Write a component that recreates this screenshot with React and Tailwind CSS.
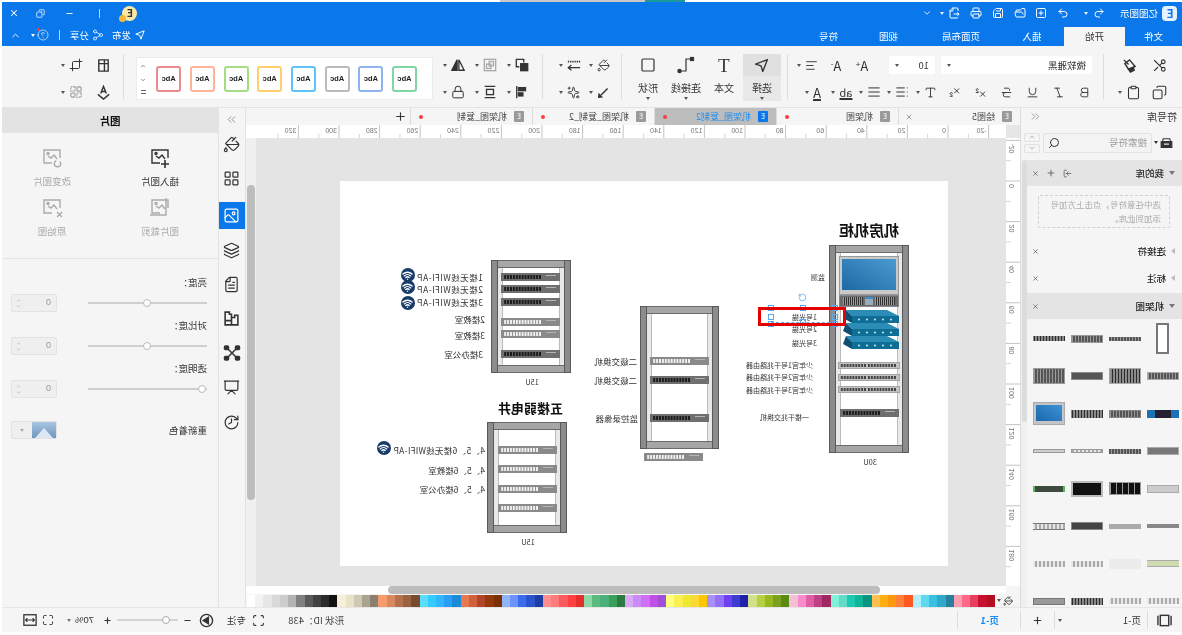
import React from 'react';
import {
  X, Copy, Minus, ChevronUp, ChevronDown, CircleHelp, Share2, Undo2, Redo2, SquarePlus, FolderOpen, Save, Printer, FileOutput,
  Scissors, Clipboard, Bold, Italic, Underline, Strikethrough, Superscript, Subscript, AlignJustify, List, AlignRight,
  PaintBucket, LayoutGrid, Image, Layers, FileText, Presentation, History, Search, Plus, LogIn, RotateCw, Square, Type,
  ChevronsLeft, ChevronsRight, Lock, Sparkles, Crop, Scan, Maximize, Wifi,
} from 'lucide-react';

// The whole screenshot is a mirror image, so the app is written the normal way round and flipped once at the root.

const Caret = ({ className = 'text-[#555]' }) => <span className={`inline-block w-0 h-0 border-x-[2.5px] border-x-transparent border-t-[3px] border-t-current ${className}`} />;

const Cell = ({ w, icon: Icon, caret, size = 15, faded, children }) => (
  <div className={`${w} h-full flex items-center justify-center gap-[4px] ${faded ? 'text-[#aaa]' : 'text-[#333]'}`}>
    {Icon ? <Icon size={size} strokeWidth={1.7} /> : children}
    {caret && <Caret />}
  </div>
);

const Sep = ({ className = '' }) => <div className={`w-px bg-[#dcdcdc] ${className}`} />;

const Glyph = ({ size = 15, children }) => (
  <svg width={size} height={size} viewBox="0 0 16 16" fill="none" stroke="currentColor" strokeWidth="1.5">{children}</svg>
);

const CursorIcon = ({ size = 17 }) => (
  <svg width={size} height={size} viewBox="0 0 20 20" fill="none" stroke="currentColor" strokeWidth="1.6" strokeLinejoin="round">
    <path d="M3 3 L17 8.5 L10.5 10.5 L8.5 17 Z" />
  </svg>
);

const Connector = () => (
  <svg width="18" height="18" viewBox="0 0 18 18" fill="none" stroke="#333" strokeWidth="1.2">
    <path d="M3 3 H9 V15 H15" />
    <rect x="1.5" y="1.5" width="3" height="3" fill="#333" />
    <circle cx="15.5" cy="15" r="1.6" fill="#333" />
  </svg>
);

const PainterIcon = ({ size }) => <Glyph size={size}><path d="M2 9 L8 2 L13 6 L9 12 Z" /><path d="M9 7 L14 2" /><path d="M4 10 L9 12 L7 15 L3 13 Z" fill="currentColor" /></Glyph>;
const FlipIcon = ({ size }) => <Glyph size={size}><path d="M7 2 V14 H1 Z" /><path d="M9 2 V14 H15 Z" fill="currentColor" /></Glyph>;
const FrontIcon = ({ size }) => <Glyph size={size}><rect x="1.5" y="6.5" width="8" height="8" fill="currentColor" /><path d="M6 5 V1.5 H14.5 V10 H11" /></Glyph>;
const GroupIcon = ({ size }) => <Glyph size={size}><rect x="1.5" y="1.5" width="13" height="13" /><rect x="4" y="4" width="5" height="5" /><rect x="7" y="7" width="5" height="5" /></Glyph>;
const AlignIcon = ({ size }) => <Glyph size={size}><path d="M14 1 V15" /><rect x="4" y="3" width="8" height="3.5" fill="currentColor" /><rect x="7" y="9" width="5" height="3.5" fill="currentColor" /></Glyph>;
const DistributeIcon = ({ size }) => <Glyph size={size}><path d="M2 1.5 H14 M2 14.5 H14" /><rect x="4" y="5" width="8" height="6" /></Glyph>;
const SpacingIcon = ({ size }) => <Glyph size={size}><path d="M1 4 H15" strokeDasharray="1.5 1" strokeWidth="2" /><path d="M1 11 H14 M11 8 L14.5 11 L11 14" /></Glyph>;
const LineIcon = ({ size }) => <Glyph size={size}><path d="M3 3 L11 11" strokeWidth="1.8" /><path d="M10 13.5 L14 14 L13.5 10 Z" fill="currentColor" /></Glyph>;
const PageIcon = ({ size }) => <Glyph size={size}><path d="M3 2 H13 V14 H3 Z" /><path d="M3 6 H13 M7 2 V14" /></Glyph>;
const StyleAIcon = ({ size }) => <Glyph size={size}><path d="M5 9 L8 1.5 L11 9 M6 7 H10" /><path d="M2 10 L8 15 L14 10" /></Glyph>;
const PiecesIcon = ({ size }) => <Glyph size={size}><circle cx="4.5" cy="4.5" r="2.5" /><rect x="9" y="2" width="5" height="5" strokeDasharray="2 1" /><rect x="2" y="9" width="5" height="5" strokeDasharray="2 1" /><circle cx="11.5" cy="11.5" r="2.5" /></Glyph>;
const PuzzleIcon = ({ size = 17 }) => <Glyph size={size}><path d="M2 5 H5 V7 H8 V4 H10 V2 H14 V14 H2 Z" /><path d="M8 7 V14 M8 10 H14" /></Glyph>;
const LibraryIcon = () => <Glyph size={13}><path d="M4 3.5 H12 L13 7 H3 Z" strokeWidth="1.3" /><rect x="1.5" y="7" width="13" height="7" fill="currentColor" /><path d="M5 10 H11" stroke="#f5f5f5" /></Glyph>;
const FitIcon = () => <Glyph size={14}><rect x="1" y="2" width="14" height="12" /><path d="M3.5 8 H12.5 M5 6 L3 8 L5 10 M11 6 L13 8 L11 10" strokeWidth="1.3" /></Glyph>;
const PageViewIcon = () => <Glyph size={15}><rect x="3.5" y="2.5" width="9" height="11" /><path d="M1 3 V13 M15 3 V13" /></Glyph>;
const PlayIcon = () => <Glyph size={15}><circle cx="8" cy="8" r="6.5" /><path d="M6 4.5 L11.5 8 L6 11.5 Z" fill="currentColor" /></Glyph>;

const TitleBar = () => (
  <div className="h-[44px] bg-[#0a78ea] text-white flex flex-col shrink-0">
    <div className="h-[25px] flex items-center pb-[3px]">
      <div className="w-[24px] flex justify-center">
        <div className="w-[15px] h-[15px] rounded-[4px] bg-white/90 flex items-center justify-center text-[#0a78ea] text-[11px] font-bold leading-none">E</div>
      </div>
      <span className="text-[9.5px] w-[48px]">亿图图示</span>
      <Cell w="w-[22px]"><Undo2 size={12} className="text-white" /></Cell>
      <Caret className="text-white/90" />
      <div className="w-[10px]" />
      <Cell w="w-[22px]"><Redo2 size={12} className="text-white" /></Cell>
      <Cell w="w-[21px]"><SquarePlus size={12} className="text-white" /></Cell>
      <Cell w="w-[22px]"><FolderOpen size={12} className="text-white" /></Cell>
      <Cell w="w-[22px]"><Save size={12} className="text-white" /></Cell>
      <Cell w="w-[22px]"><Printer size={12} className="text-white" /></Cell>
      <Cell w="w-[21px]"><FileOutput size={12} className="text-white" /></Cell>
      <Caret className="text-white/90" />
      <div className="w-[8px]" />
      <ChevronDown size={10} />
      <div className="ml-auto flex h-full items-center">
        <div className="w-[30px] flex justify-center">
          <div className="relative w-[15px] h-[15px] rounded-full bg-[#fbe9a8] text-[#333] text-[10px] font-bold flex items-center justify-center leading-none">
            E
            <span className="absolute -bottom-[1px] -right-[3px] w-[7px] h-[7px] rounded-full bg-[#f5b73d]" />
          </div>
        </div>
        <div className="w-[30px] flex justify-center"><div className="w-px h-[9px] bg-white/70" /></div>
        <div className="w-[30px] flex justify-center"><Minus size={9} strokeWidth={2.5} /></div>
        <div className="w-[28px] flex justify-center"><Copy size={9} strokeWidth={2} /></div>
        <div className="w-[25px] flex justify-center"><X size={10} strokeWidth={2.5} /></div>
      </div>
    </div>
    <div className="h-[19px] flex items-center">
      <div className="w-[57px] text-center text-[9.5px]">文件</div>
      <div className="w-[61px] h-full bg-[#f5f5f5] text-[#333] text-[9.5px] flex items-center justify-center">开始</div>
      <div className="w-[64px] text-center text-[9.5px]">插入</div>
      <div className="w-[78px] text-center text-[9.5px]">页面布局</div>
      <div className="w-[67px] text-center text-[9.5px]">视图</div>
      <div className="w-[53px] text-center text-[9.5px]">符号</div>
      <div className="ml-auto flex items-center pb-[3px]">
        <CursorIcon size={12} />
        <span className="text-[9.5px] ml-[3px] mr-[8px]">发布</span>
        <Share2 size={12} strokeWidth={1.5} />
        <span className="text-[9.5px] ml-[3px]">分享</span>
        <div className="w-px h-[10px] bg-white/70 ml-[10px]" />
        <div className="relative ml-[10px]">
          <CircleHelp size={12} strokeWidth={1.3} />
          <span className="absolute -top-[1px] right-0 w-[3px] h-[3px] rounded-full bg-[#ff3b30]" />
        </div>
        <Caret className="ml-[2px] text-white" />
        <ChevronUp size={11} className="ml-[10px] mr-[8px]" />
      </div>
    </div>
  </div>
);

const GALLERY = ['#7fd6a4', '#8eb4ee', '#bbbbbb', '#5ec3f7', '#ffcf6b', '#a5dd85', '#ffb399', '#ec8a8f'];

const Ribbon = () => (
  <div className="h-[62px] bg-[#f5f5f5] flex shrink-0 border-b border-[#e2e2e2] text-[#333]">
    <div className="w-[78px] flex flex-col pt-[10px] gap-[9px] pl-[9px]">
      <div className="h-[18px] flex">
        <Cell w="w-[26px]" icon={Scissors} />
        <div className="w-[4px]" />
        <Cell w="w-[26px]"><PainterIcon size={15} /></Cell>
      </div>
      <div className="h-[18px] flex">
        <Cell w="w-[26px]" icon={Copy} />
        <div className="w-[4px]" />
        <Cell w="w-[26px]" icon={Clipboard} caret />
      </div>
    </div>
    <Sep className="my-[8px]" />
    <div className="w-[315px] flex flex-col pt-[10px] gap-[9px]">
      <div className="h-[18px] flex pl-[11px]">
        <div className="w-[151px] h-full bg-white rounded-[2px] flex items-center justify-between px-[6px] text-[9.5px]">
          微软雅黑
          <Caret />
        </div>
        <div className="w-[46px] ml-[6px] h-full bg-white rounded-[2px] flex items-center justify-between px-[6px] text-[9.5px]">
          10
          <Caret />
        </div>
        <div className="w-[14px]" />
        <Cell w="w-[26px]"><span className="text-[13px] leading-none">A<sup className="text-[8px]">+</sup></span></Cell>
        <Cell w="w-[26px]"><span className="text-[13px] leading-none">A<sup className="text-[8px]">-</sup></span></Cell>
        <Cell w="w-[30px]" icon={AlignRight} caret size={13} />
      </div>
      <div className="h-[18px] flex pl-[5px]">
        <Cell w="w-[26px]" icon={Bold} size={13} />
        <Cell w="w-[26px]" icon={Italic} size={13} />
        <Cell w="w-[26px]" icon={Underline} size={13} />
        <Cell w="w-[26px]" icon={Strikethrough} size={13} />
        <Cell w="w-[26px]" icon={Superscript} size={13} />
        <Cell w="w-[26px]" icon={Subscript} size={13} />
        <Cell w="w-[30px]" icon={Type} caret size={13} />
        <Cell w="w-[28px]" icon={List} caret size={14} />
        <Cell w="w-[28px]" icon={AlignJustify} caret size={14} />
        <Cell w="w-[28px]"><span className="text-[11px] leading-none underline decoration-2">ab</span><Caret /></Cell>
        <Cell w="w-[30px]"><span className="text-[13px] leading-none underline decoration-2">A</span><Caret /></Cell>
      </div>
    </div>
    <Sep className="my-[8px]" />
    <div className="w-[165px] flex pl-[6px] pt-[8px] pb-[6px] text-[10px]">
      <div className="w-[38px] bg-[#e8e8e8] flex flex-col items-center">
        <div className="h-[22px] w-full bg-[#e0e0e0] flex items-center justify-center"><CursorIcon /></div>
        <span className="mt-[5px] leading-[14px]">选择</span>
        <Caret className="mt-[2px] text-[#555]" />
      </div>
      <div className="w-[38px] flex flex-col items-center">
        <div className="h-[22px] flex items-center"><span className="text-[19px] font-['Liberation_Serif',serif] leading-none">T</span></div>
        <span className="mt-[5px] leading-[14px]">文本</span>
      </div>
      <div className="w-[38px] flex flex-col items-center">
        <div className="h-[22px] flex items-center"><Connector /></div>
        <span className="mt-[5px] leading-[14px]">连接线</span>
        <Caret className="mt-[2px] text-[#555]" />
      </div>
      <div className="w-[38px] flex flex-col items-center">
        <div className="h-[22px] flex items-center"><Square size={16} strokeWidth={1.8} /></div>
        <span className="mt-[5px] leading-[14px]">形状</span>
        <Caret className="mt-[2px] text-[#555]" />
      </div>
    </div>
    <Sep className="my-[8px]" />
    <div className="w-[78px] flex flex-col pt-[10px] gap-[9px] pl-[6px]">
      <div className="h-[18px] flex">
        <Cell w="w-[30px]" icon={PaintBucket} caret size={13} />
        <Cell w="w-[30px]" caret><SpacingIcon size={14} /></Cell>
      </div>
      <div className="h-[18px] flex">
        <Cell w="w-[30px]" caret><LineIcon size={13} /></Cell>
        <Cell w="w-[30px]" icon={Sparkles} caret size={13} />
      </div>
    </div>
    <Sep className="my-[8px]" />
    <div className="w-[109px] flex flex-col pt-[10px] gap-[9px] pl-[8px]">
      <div className="h-[18px] flex">
        <Cell w="w-[32px]" caret><FrontIcon size={14} /></Cell>
        <Cell w="w-[32px]" caret faded><GroupIcon size={14} /></Cell>
        <Cell w="w-[32px]" caret><FlipIcon size={14} /></Cell>
      </div>
      <div className="h-[18px] flex">
        <Cell w="w-[32px]" caret><AlignIcon size={14} /></Cell>
        <Cell w="w-[32px]" caret><DistributeIcon size={14} /></Cell>
        <Cell w="w-[32px]" icon={Lock} caret size={14} />
      </div>
    </div>
    <div className="w-[297px] h-[43px] mt-[11px] bg-white border border-[#ececec] flex items-center pl-[15px] gap-[8.7px]">
      {GALLERY.map((c, i) => (
        <div key={i} style={{ borderColor: c }} className="w-[25px] h-[26px] shrink-0 rounded-[3px] border-2 bg-white flex items-center justify-center text-[7.5px] font-semibold text-[#222] font-['Liberation_Sans',sans-serif]">Abc</div>
      ))}
      <div className="ml-[1px] h-full flex flex-col justify-between items-center py-[5px] text-[#666]">
        <ChevronUp size={6} strokeWidth={3} />
        <ChevronDown size={6} strokeWidth={3} />
        <Menu3 />
      </div>
    </div>
    <div className="w-[12px]" />
    <Sep className="my-[8px]" />
    <div className="flex flex-col pt-[10px] gap-[9px] pl-[9px]">
      <div className="h-[18px] flex">
        <Cell w="w-[20px]"><PageIcon size={15} /></Cell>
        <div className="w-[7px]" />
        <Cell w="w-[30px]" icon={Crop} caret size={14} />
      </div>
      <div className="h-[18px] flex">
        <Cell w="w-[20px]"><StyleAIcon size={15} /></Cell>
        <div className="w-[7px]" />
        <Cell w="w-[30px]" caret faded><PiecesIcon size={14} /></Cell>
      </div>
    </div>
  </div>
);

const Menu3 = () => <div className="w-[5px] h-[4px] border-y border-[#666]" />;

const Tab = ({ name, active, closable }) => (
  <div className={`w-[122px] h-full flex items-center pl-[8px] border-r border-[#dcdcdc] text-[9px] shrink-0 ${active ? 'bg-[#bdbdbd] text-[#1b8ef2]' : 'text-[#444]'}`}>
    <div className={`w-[10px] h-[11px] rounded-[1px] flex items-center justify-center text-[7px] leading-none text-white ${active ? 'bg-[#0a78ea]' : 'bg-[#9a9a9a]'}`}>E</div>
    <span className="ml-[7px]">{name}</span>
    {closable ? <X size={8} className="ml-auto mr-[6px] text-[#777]" /> : <span className="ml-auto mr-[8px] w-[4px] h-[4px] rounded-full bg-[#ff3b3b]" />}
  </div>
);

const RULER_STEP = 2.03;
const TOP_VALUES = [-20, 0, 20, 40, 60, 80, 100, 120, 140, 160, 180, 200, 220, 240, 260, 280, 300, 320];
const SIDE_VALUES = [-20, 0, 20, 40, 60, 80, 100, 120, 140, 160, 180];

const TopRuler = () => (
  <svg width="774" height="13" className="block shrink-0 bg-white">
    <rect x="0" y="0" width="14" height="13" fill="#e6e6e6" />
    {TOP_VALUES.map((v) => {
      const x = 72 + v * RULER_STEP;
      return (
        <g key={v}>
          <line x1={x} y1="0" x2={x} y2="13" stroke="#c4c4c4" />
          <line x1={x + 20.3} y1="9" x2={x + 20.3} y2="13" stroke="#d4d4d4" />
          <text x={x + 2} y="8" fontSize="7" fill="#777" fontFamily="Liberation Sans">{v}</text>
        </g>
      );
    })}
  </svg>
);

const SideRuler = () => (
  <svg width="14" height="448" className="block shrink-0 bg-white">
    {SIDE_VALUES.map((v) => {
      const y = 43 + v * RULER_STEP;
      return (
        <g key={v}>
          <line x1="0" y1={y} x2="14" y2={y} stroke="#c4c4c4" />
          <line x1="9" y1={y + 20.3} x2="14" y2={y + 20.3} stroke="#d4d4d4" />
          <text x="6" y={y + 3} fontSize="7" fill="#777" fontFamily="Liberation Sans" transform={`rotate(90 6 ${y + 3})`}>{v}</text>
        </g>
      );
    })}
  </svg>
);

const Rack = ({ className }) => (
  <div className={`absolute flex ${className}`}>
    <div className="w-[7px] bg-[#8c8c8c] border border-[#5a5a5a]" />
    <div className="flex-1 flex flex-col">
      <div className="h-[8px] bg-[#a6a6a6] border-y border-[#6a6a6a]" />
      <div className="flex-1 flex justify-between bg-white">
        <div className="w-[5px] bg-[#e9e9e9] border-r border-[#bbb]" />
        <div className="w-[5px] bg-[#e9e9e9] border-l border-[#bbb]" />
      </div>
      <div className="h-[8px] bg-[#a6a6a6] border-y border-[#6a6a6a]" />
    </div>
    <div className="w-[7px] bg-[#8c8c8c] border border-[#5a5a5a]" />
  </div>
);

const SWITCH_PORTS = Array.from({ length: 13 }, (_, i) => i);

const Switch = ({ className, light }) => (
  <svg width="59" height="8" className={`absolute ${className}`}>
    <rect width="59" height="8" fill={light ? '#8a8a8a' : '#6f6f6f'} />
    <rect x="4" y="2" width="10" height="1" fill="#b5b5b5" />
    {SWITCH_PORTS.map((i) => (
      <rect key={i} x={19 + i * 2.9} y="2" width="2" height="4" fill={light ? '#efefef' : '#1c1c1c'} />
    ))}
  </svg>
);

const Patch = ({ className }) => (
  <svg width="62" height="7" className={`absolute ${className}`}>
    <rect width="62" height="7" fill="#c2c2c2" stroke="#8a8a8a" />
    {Array.from({ length: 19 }, (_, i) => i).map((i) => (
      <rect key={i} x={4 + i * 2.9 + (i > 9 ? 1 : 0)} y="2" width="2" height="3" fill="#444" />
    ))}
  </svg>
);

const BlueSwitch = ({ className }) => (
  <svg width="56" height="14" className={`absolute ${className}`}>
    <polygon points="0,6 47,6 53,0 12,0" fill="#2b8cb5" />
    <polygon points="47,6 53,0 56,8 47,13" fill="#0c4f70" />
    <rect x="0" y="6" width="47" height="7" fill="#0f6e96" />
    {[8, 16, 24, 32, 40].map((x) => <circle key={x} cx={x} cy="9.5" r="0.9" fill="#e8f6fb" />)}
  </svg>
);

const WifiBadge = ({ className }) => (
  <div className={`absolute w-[14px] h-[14px] rounded-full bg-[#173a6b] flex items-center justify-center text-white ${className}`}>
    <Wifi size={11} strokeWidth={3} />
  </div>
);

const Label = ({ className, children }) => (
  <div className={`absolute whitespace-nowrap leading-[10px] text-[#333] ${className}`}>{children}</div>
);

const Diagram = () => (
  <div className="relative w-[608px] h-[385px] bg-white shrink-0 overflow-hidden">
    {/* 机房机柜 */}
    <div className="absolute left-[49px] top-[39px] text-[15px] leading-[20px] font-bold text-[#111]">机房机柜</div>
    <Rack className="left-[39px] top-[64px] w-[80px] h-[208px]" />
    <div className="absolute left-[49px] top-[75px] w-[60px] h-[39px] bg-[#c9c9c9] border border-[#999] p-[2px] pb-[4px]">
      <div className="w-full h-full bg-gradient-to-br from-[#4a9bd0] to-[#1a6aa5]" />
    </div>
    <div className="absolute left-[49px] top-[114px] w-[60px] h-[12px] bg-[#6c6c6c] border border-[#888] flex items-center px-[3px] gap-[2px]">
      <div className="flex-1 h-[8px] bg-[repeating-linear-gradient(90deg,#333_0_1px,#999_1px_2px)]" />
      <div className="w-[8px] h-[8px] bg-[#9ab] border-t-2 border-[#3b8ed0]" />
      <div className="flex-1 h-[8px] bg-[repeating-linear-gradient(90deg,#333_0_1px,#999_1px_2px)]" />
    </div>
    <BlueSwitch className="left-[49px] top-[129px]" />
    <BlueSwitch className="left-[49px] top-[142px]" />
    <BlueSwitch className="left-[49px] top-[155px]" />
    <Patch className="left-[48px] top-[181px]" />
    <Patch className="left-[48px] top-[193px]" />
    <Patch className="left-[48px] top-[205px]" />
    <Switch className="left-[49px] top-[228px]" />
    <Label className="left-[123px] top-[91px] text-[7px]">监测</Label>
    <Label className="left-[131px] top-[131px] text-[7px]">1号光猫</Label>
    <Label className="left-[131px] top-[143px] text-[7px]">2号光猫</Label>
    <Label className="left-[131px] top-[157px] text-[7px]">3号光猫</Label>
    <Label className="left-[135px] top-[179px] text-[7px]">少年宫1号千兆路由器</Label>
    <Label className="left-[135px] top-[191px] text-[7px]">少年宫2号千兆路由器</Label>
    <Label className="left-[135px] top-[204px] text-[7px]">少年宫3号千兆路由器</Label>
    <Label className="left-[139px] top-[231px] text-[7px]">一楼千兆交换机</Label>
    <Label className="left-[71px] top-[276px] text-[7.5px]">30U</Label>

    {/* 中间机柜 */}
    <Rack className="left-[229px] top-[125px] w-[79px] h-[143px]" />
    <Switch className="left-[239px] top-[176px]" light />
    <Switch className="left-[239px] top-[195px]" />
    <Switch className="left-[239px] top-[233px]" />
    <Switch className="left-[245px] top-[272px]" light />
    <Label className="left-[311px] top-[175px] text-[8.5px]">二级交换机</Label>
    <Label className="left-[311px] top-[194px] text-[8.5px]">二级交换机</Label>
    <Label className="left-[310px] top-[232px] text-[8.5px]">监控录像器</Label>

    {/* 左上机柜 */}
    <Rack className="left-[377px] top-[79px] w-[80px] h-[113px]" />
    <Switch className="left-[388px] top-[92px]" />
    <Switch className="left-[388px] top-[104px]" />
    <Switch className="left-[388px] top-[117px]" />
    <Switch className="left-[388px] top-[137px]" light />
    <Switch className="left-[388px] top-[149px]" light />
    <Switch className="left-[388px] top-[169px]" />
    <Label className="left-[465px] top-[91px] text-[8.5px] tracking-[0.5px]">1楼无线WIFI-AP</Label>
    <Label className="left-[465px] top-[103px] text-[8.5px] tracking-[0.5px]">2楼无线WIFI-AP</Label>
    <Label className="left-[465px] top-[116px] text-[8.5px] tracking-[0.5px]">3楼无线WIFI-AP</Label>
    <Label className="left-[463px] top-[133px] text-[8.5px]">2楼教室</Label>
    <Label className="left-[463px] top-[149px] text-[8.5px]">3楼教室</Label>
    <Label className="left-[465px] top-[168px] text-[8.5px]">3楼办公室</Label>
    <WifiBadge className="left-[533px] top-[87px]" />
    <WifiBadge className="left-[533px] top-[99px]" />
    <WifiBadge className="left-[533px] top-[115px]" />
    <Label className="left-[409px] top-[196px] text-[7.5px]">15U</Label>

    {/* 五楼弱电井 */}
    <div className="absolute left-[385px] top-[218px] text-[13px] leading-[18px] font-bold text-[#111]">五楼弱电井</div>
    <Rack className="left-[381px] top-[241px] w-[80px] h-[111px]" />
    <Switch className="left-[391px] top-[265px]" light />
    <Switch className="left-[391px] top-[284px]" light />
    <Switch className="left-[391px] top-[304px]" light />
    <Switch className="left-[391px] top-[323px]" light />
    <Label className="left-[463px] top-[264px] text-[8.5px] tracking-[0.3px]">4、5、6楼无线WIFI-AP</Label>
    <Label className="left-[463px] top-[284px] text-[8.5px]">4、5、6楼教室</Label>
    <Label className="left-[463px] top-[303px] text-[8.5px]">4、5、6楼办公室</Label>
    <WifiBadge className="left-[557px] top-[260px]" />
    <Label className="left-[413px] top-[356px] text-[7.5px]">15U</Label>

    {/* 选中框 */}
    <RotateCw size={9} className="absolute left-[141px] top-[112px] text-[#5aa9f0]" />
    <div className="absolute left-[113px] top-[141px] w-[64px] border-t border-dashed border-[#5aa9f0]" />
    <div className="absolute left-[110px] top-[124px] w-[6px] h-[6px] border border-[#5aa9f0]" />
    <div className="absolute left-[110px] top-[133px] w-[6px] h-[6px] border border-[#5aa9f0]" />
    <div className="absolute left-[110px] top-[140px] w-[6px] h-[6px] border border-[#5aa9f0]" />
    <div className="absolute left-[142px] top-[124px] w-[6px] h-[6px] border border-[#5aa9f0]" />
    <div className="absolute left-[142px] top-[138px] w-[6px] h-[6px] border border-[#5aa9f0]" />
    <div className="absolute left-[174px] top-[124px] w-[6px] h-[6px] border border-[#5aa9f0]" />
    <div className="absolute left-[174px] top-[133px] w-[6px] h-[6px] border border-[#5aa9f0]" />
    <div className="absolute left-[174px] top-[140px] w-[6px] h-[6px] border border-[#5aa9f0]" />
    <div className="absolute left-[102px] top-[126px] w-[88px] h-[19px] border-[3px] border-[#e60000]" />
  </div>
);

const PALETTE = [
  '#ffffff', '#f2f2f2', '#e6e6e6', '#d9d9d9', '#cccccc', '#b3b3b3', '#808080', '#595959', '#404040', '#2b2b2b', '#111111',
  '#f5efd9', '#e8e2c8', '#cdc9b2', '#a9a38f', '#8c7f70',
  '#f59b6c', '#d9895f', '#b5714d', '#9a6242', '#7a4a2e',
  '#5cdcfb', '#33ccff', '#33b5ff', '#2a9df4', '#1b8ad8',
  '#e8784f', '#d1603c', '#b0452a', '#943a0a', '#7a3000',
  '#8fb4f8', '#6b93fb', '#3a6cf0', '#2b55cf', '#1f3fa0',
  '#ff8f8f', '#ff7b7b', '#fb5a5e', '#ff4040', '#e62e2e',
  '#90d8a8', '#5cbb7c', '#4cb07a', '#38a05a', '#2c7a40',
  '#dba8f8', '#c98cf5', '#cf6ff5', '#c04fe6', '#a050d8',
  '#ffff80', '#fbf050', '#f0e830', '#fdd835', '#fbc800',
  '#a890f8', '#9470fa', '#6f40f0', '#3c3cd0', '#2020a8',
  '#d3e08a', '#b5d040', '#98b820', '#7da020', '#5c8a10',
  '#f3c0d8', '#f68cc8', '#e060a8', '#c04088', '#a02860',
  '#80f0d8', '#60dcc8', '#1fc8b0', '#10b498', '#089480',
  '#ffc050', '#ffb010', '#ff9810', '#ff8038', '#ff5820',
  '#b0f0fa', '#60d8f0', '#38c0e0', '#30a8c8', '#2880a0',
  '#ff9eb0', '#ff6888', '#e84060', '#c81030', '#b01020',
];

const Canvas = () => (
  <div className="w-[774px] shrink-0 flex flex-col bg-[#f5f5f5]">
    <div className="h-[17px] flex items-center shrink-0">
      <Tab name="绘图5" closable />
      <Tab name="机架图" />
      <Tab name="机架图_复制2" active />
      <Tab name="机架图_复制_2" />
      <Tab name="机架图_复制" />
      <Plus size={13} strokeWidth={2} className="ml-[3px] text-[#333]" />
    </div>
    <TopRuler />
    <div className="h-[448px] flex shrink-0">
      <SideRuler />
      <div className="w-[750px] bg-[#e4e4e4] pl-[58px] pt-[43px] shrink-0">
        <Diagram />
      </div>
      <div className="w-[10px] bg-[#f0f0f0] pt-[47px] flex justify-center">
        <div className="w-[8px] h-[315px] rounded-full bg-[#bdbdbd]" />
      </div>
    </div>
    <div className="h-[8px] flex shrink-0 bg-white">
      <div className="w-[14px] bg-[#f5f5f5]" />
      <div className="w-[126px]" />
      <div className="w-[492px] rounded-full bg-[#bdbdbd]" />
    </div>
    <div className="h-[13px] flex shrink-0 items-center">
      <div className="w-[25px] flex items-center justify-end gap-[2px] pr-[2px] text-[#333]">
        <PaintBucket size={10} />
        <Caret />
      </div>
      <div className="w-[748px] h-[12px] flex flex-row-reverse">
        {PALETTE.map((c, i) => <div key={i} style={{ backgroundColor: c }} className="flex-1" />)}
      </div>
    </div>
  </div>
);

const NetworkIcon = () => (
  <svg width="18" height="18" viewBox="0 0 18 18" fill="none" stroke="#333" strokeWidth="1.5">
    <path d="M4 4 L14 14 M14 4 L4 14" />
    {[[1.5, 2], [12.5, 2], [1.5, 12.5], [12.5, 12.5]].map(([x, y]) => <rect key={x + '-' + y} x={x} y={y} width="4" height="3.5" rx="1" fill="#333" />)}
  </svg>
);

const SideTool = ({ icon: Icon, active, children }) => (
  <div className={`h-[27px] flex items-center justify-center mb-[7.4px] ${active ? 'bg-[#0a78ea] text-white' : 'text-[#333]'}`}>
    {Icon ? <Icon size={17} strokeWidth={1.7} /> : children}
  </div>
);

const Toolbar = () => (
  <div className="w-[28px] shrink-0 bg-[#f5f5f5] border-x border-[#e2e2e2]">
    <div className="h-[23px] flex items-center justify-center text-[#777]"><ChevronsRight size={13} strokeWidth={1.4} /></div>
    <SideTool icon={PaintBucket} />
    <SideTool icon={LayoutGrid} />
    <div className="h-[2.5px]" />
    <SideTool icon={Image} active />
    <SideTool icon={Layers} />
    <SideTool icon={FileText} />
    <SideTool><PuzzleIcon /></SideTool>
    <SideTool><NetworkIcon /></SideTool>
    <SideTool icon={Presentation} />
    <SideTool icon={History} />
  </div>
);

const ImgTool = ({ badge, faded, label }) => (
  <div className={`flex flex-col items-center ${faded ? 'text-[#aaa]' : 'text-[#333]'}`}>
    <svg width="22" height="20" viewBox="0 0 22 20" fill="none" stroke="currentColor" strokeWidth="1.4">
      <path d="M3 10 V2 H19 V15 H11" />
      <path d="M6 11 L9 7 L12 10 L15 8" />
      <circle cx="15" cy="5.5" r="1" />
      {badge === 'plus' && <path d="M2 16 H10 M6 12 V20" strokeWidth="1.6" />}
      {badge === 'swap' && <circle cx="5.5" cy="15.5" r="3.2" strokeDasharray="12 4" />}
      {badge === 'crop' && <path d="M5 0 V17 H21" />}
      {badge === 'reset' && <path d="M1 14 L6 19 M6 14 L1 19" />}
    </svg>
    <span className="text-[9.5px] leading-[14px] mt-[6px]">{label}</span>
  </div>
);

const SpinBox = () => (
  <div className="w-[46px] h-[18px] bg-[#efefef] border border-[#e3e3e3] rounded-[2px] flex items-center justify-between pl-[5px] pr-[4px] text-[#999]">
    <span className="text-[9px] font-['Liberation_Sans',sans-serif]">0</span>
    <div className="flex flex-col gap-[1px] text-[#bbb]">
      <ChevronUp size={5} strokeWidth={4} />
      <ChevronDown size={5} strokeWidth={4} />
    </div>
  </div>
);

const SliderRow = ({ knob }) => (
  <div className="h-[18px] flex items-center justify-between">
    <div className="relative w-[119px] h-[2px] bg-[#cfcfcf]">
      <div className={`absolute -top-[3px] w-[8px] h-[8px] rounded-full bg-white border border-[#bbb] ${knob}`} />
    </div>
    <SpinBox />
  </div>
);

const LeftPanel = () => (
  <div className="w-[216px] shrink-0 bg-[#f5f5f5] flex flex-col text-[#333]">
    <div className="h-[25px] bg-[#e3e3e3] flex items-center justify-center text-[10.5px] font-bold text-[#111]">图片</div>
    <div className="h-[126px] border-b border-[#e4e4e4] pt-[15px] grid grid-cols-[116px_100px] grid-rows-[40px_40px] gap-y-[10px] justify-items-center">
      <ImgTool badge="plus" label="插入图片" />
      <ImgTool badge="swap" label="改变图片" faded />
      <ImgTool badge="crop" label="图片裁剪" faded />
      <ImgTool badge="reset" label="原始图" faded />
    </div>
    <div className="pl-[11px] pr-[9px] pt-[16px] text-[9.5px]">
      <div className="leading-[14px]">亮度：</div>
      <div className="mt-[5px]"><SliderRow knob="left-[56px]" /></div>
      <div className="leading-[14px] mt-[6px]">对比度：</div>
      <div className="mt-[5px]"><SliderRow knob="left-[56px]" /></div>
      <div className="leading-[14px] mt-[6px]">透明度：</div>
      <div className="mt-[5px]"><SliderRow knob="left-[1px]" /></div>
      <div className="mt-[23px] h-[18px] flex items-center justify-between">
        <span>重新着色</span>
        <div className="w-[46px] h-[18px] flex border border-[#e3e3e3] rounded-[2px] bg-[#efefef]">
          <div className="w-[24px] bg-gradient-to-b from-[#a9c6e2] to-[#6f96c0] flex items-end justify-center overflow-hidden">
            <div className="w-0 h-0 border-x-[9px] border-x-transparent border-b-[10px] border-b-[#dbe7f3]" />
          </div>
          <div className="flex-1 flex items-center justify-center"><Caret className="text-[#aaa]" /></div>
        </div>
      </div>
    </div>
  </div>
);

const stripes = {
  dark: 'bg-[repeating-linear-gradient(90deg,#2c2c2c_0_1px,#8a8a8a_1px_3px)]',
  mid: 'bg-[repeating-linear-gradient(90deg,#555_0_2px,#999_2px_3px)]',
  light: 'bg-[repeating-linear-gradient(90deg,#aaa_0_2px,#e8e8e8_2px_4px)]',
};

// rows are listed in the order they read in the picture
const THUMBS = [
  [`h-[5px] ${stripes.dark}`, `h-[8px] border border-[#999] ${stripes.mid}`, `h-[4px] ${stripes.mid}`, 'RACK'],
  [`h-[16px] border border-[#999] ${stripes.mid}`, 'h-[8px] bg-[#555] border border-[#888]', `h-[16px] border border-[#aaa] ${stripes.dark}`, `h-[8px] border border-[#aaa] ${stripes.mid}`],
  ['SCREEN', `h-[8px] ${stripes.dark}`, `h-[8px] border border-[#888] ${stripes.mid}`, 'h-[8px] bg-[#223] border-x-8 border-[#1d6fb8]'],
  ['h-[4px] bg-[#cfcfcf] border border-[#999]', `h-[4px] ${stripes.light} border border-[#999]`, `h-[5px] ${stripes.mid}`, 'h-[8px] bg-[#777] border border-[#aaa]'],
  ['h-[6px] bg-[#3f4a3f] border-x-2 border-[#5b5]', 'h-[16px] bg-[#111] border-2 border-[#bbb]', `h-[13px] border border-[#999] bg-[repeating-linear-gradient(90deg,#111_0_5px,#999_5px_6px)]`, 'h-[8px] bg-[#ccc] border border-[#aaa]'],
  [`h-[7px] border-y border-[#777] ${stripes.light}`, 'h-[8px] bg-[#444] border border-[#888]', 'h-[5px] bg-[#aaa]', 'h-[4px] bg-[#888]'],
  [`h-[6px] ${stripes.light}`, `h-[6px] ${stripes.light}`, 'h-[10px] bg-[#ececec]', 'h-[7px] bg-[#cfdcb0] border-y border-[#aaa]'],
  ['h-[7px] bg-[#999] border border-[#777]', `h-[7px] ${stripes.dark}`, `h-[6px] ${stripes.light}`, `h-[6px] ${stripes.light}`],
];

const Thumb = ({ kind }) => {
  if (kind === 'RACK') return <div className="w-[13px] h-[31px] bg-white border-2 border-[#777]" />;
  if (kind === 'SCREEN') {
    return (
      <div className="w-[32px] h-[23px] bg-[#c5c5c5] border border-[#aaa] p-[2px] pb-[3px]">
        <div className="w-full h-full bg-gradient-to-br from-[#3d93d6] to-[#1a67ad]" />
      </div>
    );
  }
  return <div className={`w-[32px] ${kind}`} />;
};

const SectionHead = ({ name, open, children }) => (
  <div className={`h-[26px] flex items-center pl-[7px] text-[9.5px] ${open ? 'bg-[#e4e4e4]' : ''}`}>
    <span className={`w-0 h-0 ${open ? 'border-x-[3.5px] border-x-transparent border-t-[4px] border-t-[#777]' : 'border-y-[3.5px] border-y-transparent border-l-[4px] border-l-[#bbb]'}`} />
    <span className="ml-[5px] font-medium text-[#222]">{name}</span>
    <div className="ml-auto flex items-center gap-[7px] pr-[5px] text-[#555]">
      {children}
      <X size={7} strokeWidth={2.5} />
    </div>
  </div>
);

const RightPanel = () => (
  <div className="w-[162px] shrink-0 bg-[#f5f5f5] border-r border-[#dcdcdc] flex flex-col text-[#333]">
    <div className="h-[17px] flex items-center justify-between pl-[5px] pr-[8px] text-[10px]">
      <span>符号库</span>
      <ChevronsLeft size={13} strokeWidth={1.3} className="text-[#777]" />
    </div>
    <div className="h-[35px] flex items-center pl-[9px]">
      <LibraryIcon />
      <Caret className="ml-[2px]" />
      <div className="ml-[2px] w-[109px] h-[20px] bg-[#f3f3f3] border border-[#e2e2e2] rounded-[2px] flex items-center justify-between pl-[4px] pr-[4px] text-[9.5px] text-[#999]">
        搜索符号
        <Search size={12} strokeWidth={2} className="text-[#333]" />
      </div>
      <div className="ml-[3px] flex flex-col gap-[2px] text-[#999]">
        <div className="w-[16px] h-[9px] border border-[#e2e2e2] rounded-[2px] flex items-center justify-center"><ChevronUp size={8} /></div>
        <div className="w-[16px] h-[9px] border border-[#e2e2e2] rounded-[2px] flex items-center justify-center"><ChevronDown size={8} /></div>
      </div>
    </div>
    <div className="flex-1 flex min-h-0">
      <div className="w-[155px] shrink-0 overflow-hidden">
        <SectionHead name="我的库" open>
          <LogIn size={9} />
          <Plus size={10} strokeWidth={2} />
        </SectionHead>
        <div className="mt-[9px] ml-[12px] w-[132px] h-[33px] border border-dashed border-[#cfcfcf] rounded-[2px] px-[8px] py-[2px] text-[8.5px] leading-[13.5px] text-[#aaa]">
          选中任意符号，点击上方加号添加到此库。
        </div>
        <div className="mt-[10px]"><SectionHead name="连接符" /></div>
        <div className="mt-px"><SectionHead name="标注" /></div>
        <div className="mt-[2px]"><SectionHead name="机架图" open /></div>
        <div className="pt-px">
          {THUMBS.map((row, i) => (
            <div key={i} className="h-[37.5px] w-[152px] flex flex-row-reverse">
              {row.map((kind, j) => (
                <div key={j} className="w-[38px] flex items-center justify-center"><Thumb kind={kind} /></div>
              ))}
            </div>
          ))}
        </div>
      </div>
      <div className="w-[6px] bg-[#f0f0f0]">
        <div className="w-[5px] h-[262px] rounded-full bg-[#dcdcdc]" />
      </div>
    </div>
  </div>
);

const StatusBar = () => (
  <div className="h-[25px] shrink-0 bg-[#f5f5f5] border-t border-[#e6e6e6] flex items-center text-[#333] text-[9.5px]">
    <div className="w-[34px] flex justify-center"><PageViewIcon /></div>
    <Sep className="h-[18px]" />
    <span className="ml-[6px] w-[79px]">页-1</span>
    <Caret />
    <div className="w-[3px]" />
    <Sep className="h-[18px]" />
    <div className="w-[33px] flex justify-center"><Plus size={11} strokeWidth={2.4} /></div>
    <Sep className="h-[18px]" />
    <span className="ml-[21px] w-[41px] font-bold text-[#1b8ef2]">页-1</span>
    <Sep className="h-[18px]" />
    <span className="ml-[613px] w-[70px] text-[#444]">形状 ID：438</span>
    <Scan size={13} strokeWidth={2} className="ml-[9px]" />
    <span className="ml-[6px]">专注</span>
    <div className="ml-[13px]"><PlayIcon /></div>
    <Minus size={9} strokeWidth={3} className="ml-[7px]" />
    <div className="relative ml-[5px] w-[61px] h-[2px] bg-[#d4d4d4]">
      <div className="absolute -top-[3px] left-[8px] w-[8px] h-[8px] rounded-full bg-white border border-[#aaa]" />
    </div>
    <Plus size={9} strokeWidth={3} className="ml-[5px]" />
    <span className="ml-[9px] w-[20px] font-['Liberation_Sans',sans-serif]">70%</span>
    <Caret className="ml-[3px] text-[#777]" />
    <Maximize size={12} strokeWidth={2} className="ml-[13px]" />
    <div className="ml-[5px]"><FitIcon /></div>
  </div>
);

export default function App() {
  return (
    <div className="w-[1182px] h-[635px] bg-white overflow-hidden -scale-x-100 blur-[0.4px] pr-[2px] font-['Noto_Sans_CJK_SC','Noto_Sans',sans-serif]">
      <div className="h-[2px] flex">
        <div className="w-[497px]" />
        <div className="w-[40px] bg-[#1a9a9a]" />
        <div className="w-[145px] bg-[#c8c8c8]" />
      </div>
      <TitleBar />
      <Ribbon />
      <div className="h-[499px] flex">
        <RightPanel />
        <Canvas />
        <Toolbar />
        <LeftPanel />
      </div>
      <StatusBar />
    </div>
  );
}
